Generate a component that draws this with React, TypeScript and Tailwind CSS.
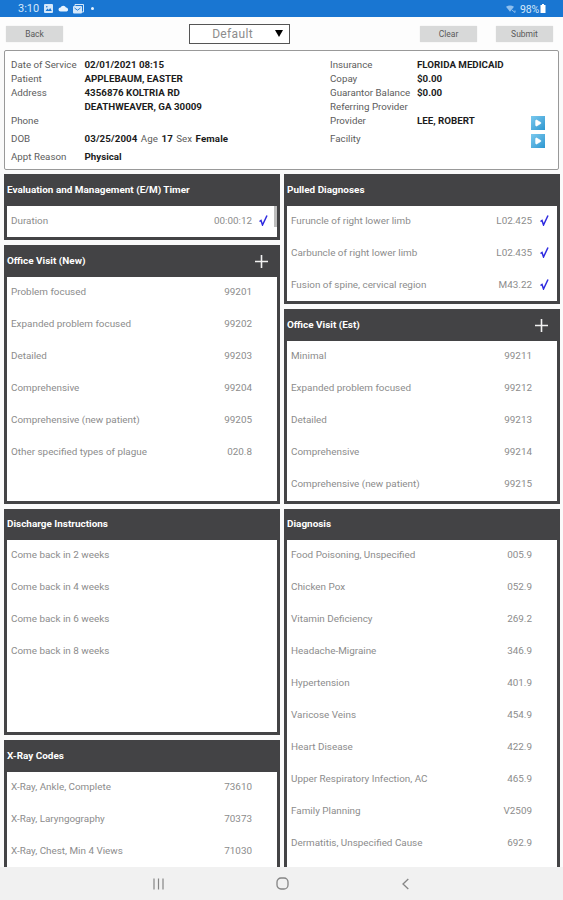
import { Play } from "lucide-react";
import clsx from "clsx";

type Item = { label: string; code?: string; checked?: boolean };

const timer: Item[] = [{ label: "Duration", code: "00:00:12", checked: true }];

const pulledDiagnoses: Item[] = [
  { label: "Furuncle of right lower limb", code: "L02.425", checked: true },
  { label: "Carbuncle of right lower limb", code: "L02.435", checked: true },
  { label: "Fusion of spine, cervical region", code: "M43.22", checked: true },
];

const officeVisitNew: Item[] = [
  { label: "Problem focused", code: "99201" },
  { label: "Expanded problem focused", code: "99202" },
  { label: "Detailed", code: "99203" },
  { label: "Comprehensive", code: "99204" },
  { label: "Comprehensive (new patient)", code: "99205" },
  { label: "Other specified types of plague", code: "020.8" },
];

const officeVisitEst: Item[] = [
  { label: "Minimal", code: "99211" },
  { label: "Expanded problem focused", code: "99212" },
  { label: "Detailed", code: "99213" },
  { label: "Comprehensive", code: "99214" },
  { label: "Comprehensive (new patient)", code: "99215" },
];

const discharge: Item[] = [
  { label: "Come back in 2 weeks" },
  { label: "Come back in 4 weeks" },
  { label: "Come back in 6 weeks" },
  { label: "Come back in 8 weeks" },
];

const diagnosis: Item[] = [
  { label: "Food Poisoning, Unspecified", code: "005.9" },
  { label: "Chicken Pox", code: "052.9" },
  { label: "Vitamin Deficiency", code: "269.2" },
  { label: "Headache-Migraine", code: "346.9" },
  { label: "Hypertension", code: "401.9" },
  { label: "Varicose Veins", code: "454.9" },
  { label: "Heart Disease", code: "422.9" },
  { label: "Upper Respiratory Infection, AC", code: "465.9" },
  { label: "Family Planning", code: "V2509" },
  { label: "Dermatitis, Unspecified Cause", code: "692.9" },
];

const xray: Item[] = [
  { label: "X-Ray, Ankle, Complete", code: "73610" },
  { label: "X-Ray, Laryngography", code: "70373" },
  { label: "X-Ray, Chest, Min 4 Views", code: "71030" },
];

function StatusBar() {
  return (
    <div className="flex h-[17px] shrink-0 items-center bg-[#1976d2] pr-[17px] pl-[18px] text-[11px] text-[#d5e8fa]">
      <span className="mt-[2px] w-[22px]">3:10</span>
      <svg className="ml-1 h-[9px] w-[9px]" viewBox="0 0 9 9">
        <rect width="9" height="9" rx="1" fill="#d5e8fa" />
        <path d="M1.5 7l2-2.5 1.3 1.4L6.2 4 7.8 7z" fill="#1976d2" />
        <circle cx="2.8" cy="2.7" r=".8" fill="#1976d2" />
      </svg>
      <svg className="ml-[5px] h-[7px] w-[11px]" viewBox="0 0 11 7">
        <path d="M2.5 6.5a2 2 0 0 1 0-4A3 3 0 0 1 8 2.6a2 2 0 0 1 .7 3.9z" fill="#e8f3fd" />
      </svg>
      <svg className="ml-[4px] h-[10px] w-[11px]" viewBox="0 0 11 10">
        <path d="M2 2V.5h8.5V8H9" fill="none" stroke="#d5e8fa" />
        <rect y="2" width="9" height="7.5" rx="1" fill="#d5e8fa" />
        <path d="M1.5 4l3 2.2 3-2.2" fill="none" stroke="#1976d2" strokeWidth=".9" />
      </svg>
      <span className="ml-[7px] h-[3px] w-[3px] rounded-full bg-[#e8f3fd]" />
      <svg className="ml-auto h-[8px] w-[10px]" viewBox="0 0 10 8">
        <path d="M0 1.8Q4 -1 8 1.8L4 6.8z" fill="#8fbfee" />
        <path d="M6 5l3 2.5M9 5.5v2" stroke="#8fbfee" />
      </svg>
      <span className="mt-[2px] ml-1 w-[20px] text-[10.5px] tracking-[-0.2px]">98%</span>
      <svg className="h-[9px] w-[6px]" viewBox="0 0 6 9">
        <path d="M2 0h2v1h1.5v8h-5V1H2z" fill="#fff" />
      </svg>
    </div>
  );
}

function ToolButton({ label, className }: { label: string; className?: string }) {
  return (
    <button
      className={clsx(
        "h-[16px] w-[57px] rounded-[1px] bg-[#d8d9d9] text-[8.5px] leading-[17px] text-[#5a5a5a] shadow-[0_0_1px_#c8c8c8]",
        className
      )}
    >
      {label}
    </button>
  );
}

function Toolbar() {
  return (
    <div className="flex h-[33px] shrink-0 items-center bg-[#fdfdfd] pr-[10px] pl-[6px]">
      <ToolButton label="Back" />
      <div className="ml-[126px] flex h-[20px] w-[101px] items-center justify-end border-[1.5px] border-[#555] bg-white pr-[6px]">
        <span className="mr-[22px] text-[12px] tracking-[0.35px] text-[#8c8c8c]">Default</span>
        <svg className="h-[7px] w-[8px]" viewBox="0 0 8 7">
          <path d="M0 0h8L4 7z" fill="#000" />
        </svg>
      </div>
      <ToolButton label="Clear" className="ml-auto" />
      <ToolButton label="Submit" className="ml-[19px]" />
    </div>
  );
}

function Field({
  label,
  value,
  className,
  labelWidth,
}: {
  label: string;
  value?: React.ReactNode;
  className: string;
  labelWidth: string;
}) {
  return (
    <div className={clsx("flex whitespace-nowrap", className)}>
      <span className={clsx("shrink-0 text-[#5c5c5c]", labelWidth)}>{label}</span>
      <span className="font-bold text-[#1c1c1c]">{value}</span>
    </div>
  );
}

function NextButton() {
  return (
    <button className="flex h-[14px] w-[14px] items-center justify-center bg-linear-to-br from-[#79c9ee] to-[#2a97d0]">
      <Play className="h-[8px] w-[8px] fill-white text-white" />
    </button>
  );
}

function PatientInfo() {
  return (
    <div className="ml-[4px] flex h-[120px] w-[555px] shrink-0 rounded-[2px] border border-[#999] bg-white pt-[7px] pl-[6px] text-[9.75px] leading-[14px]">
      <div className="w-[319px]">
        <Field label="Date of Service" value="02/01/2021 08:15" className="h-[14px]" labelWidth="w-[73.5px]" />
        <Field label="Patient" value="APPLEBAUM, EASTER" className="h-[14px]" labelWidth="w-[73.5px]" />
        <Field label="Address" value="4356876 KOLTRIA RD" className="h-[14px]" labelWidth="w-[73.5px]" />
        <Field label="" value="DEATHWEAVER, GA 30009" className="h-[14px]" labelWidth="w-[73.5px]" />
        <Field label="Phone" className="h-[18px]" labelWidth="w-[73.5px]" />
        <Field
          label="DOB"
          value={
            <span className="tracking-[0.1px] [word-spacing:0.8px]">
              03/25/2004 <span className="font-normal text-[#5c5c5c]">Age</span> 17{" "}
              <span className="font-normal text-[#5c5c5c]">Sex</span> Female
            </span>
          }
          className="h-[18px]"
          labelWidth="w-[73.5px]"
        />
        <Field label="Appt Reason" value="Physical" className="h-[14px]" labelWidth="w-[73.5px]" />
      </div>
      <div className="w-[201px]">
        <Field label="Insurance" value="FLORIDA MEDICAID" className="h-[14px]" labelWidth="w-[87px]" />
        <Field label="Copay" value="$0.00" className="h-[14px]" labelWidth="w-[87px]" />
        <Field label="Guarantor Balance" value="$0.00" className="h-[14px]" labelWidth="w-[87px]" />
        <Field label="Referring Provider" className="h-[14px]" labelWidth="w-[87px]" />
        <Field label="Provider" value="LEE, ROBERT" className="h-[18px]" labelWidth="w-[87px]" />
        <Field label="Facility" className="h-[14px]" labelWidth="w-[87px]" />
      </div>
      <div className="flex flex-col gap-[4px] pt-[58px]">
        <NextButton />
        <NextButton />
      </div>
    </div>
  );
}

function Panel({
  title,
  items,
  className,
  headerHeight = "h-[32px]",
  canAdd,
  scrollbar,
}: {
  title: string;
  items: Item[];
  className: string;
  headerHeight?: string;
  canAdd?: boolean;
  scrollbar?: boolean;
}) {
  return (
    <section className={clsx("flex flex-col border-[3px] border-t-0 border-[#434345] bg-white", className)}>
      <header
        className={clsx(
          "flex shrink-0 items-center justify-between bg-[#434345] pr-[9px] text-[9.95px] font-bold text-white",
          headerHeight
        )}
      >
        <span>{title}</span>
        {canAdd && (
          <svg className="h-[13px] w-[13px]" viewBox="0 0 13 13">
            <path d="M6.5 0v13M0 6.5h13" stroke="#f2f2f2" strokeWidth="1.6" />
          </svg>
        )}
      </header>
      <div className="flex min-h-0 flex-1 overflow-hidden">
        <ul className="flex-1">
          {items.map((item) => (
            <li
              key={item.label}
              className="flex h-8 pt-2 pl-[4px] text-[9.9px] leading-[13px] whitespace-nowrap text-[#8c8c8c]"
            >
              <span className="flex-1">{item.label}</span>
              <span>{item.code}</span>
              <span className={clsx("flex justify-center", scrollbar ? "w-[22px]" : "w-[25px]")}>
                {item.checked && (
                  <svg className="mt-[1px] h-[11px] w-[9px]" viewBox="0 0 9 11">
                    <path d="M.5 6.5l1.5-1L3.5 10 8 .5" fill="none" stroke="#2f2be0" strokeWidth="1.5" />
                  </svg>
                )}
              </span>
            </li>
          ))}
        </ul>
        {scrollbar && <div className="h-[21px] w-[3px] bg-[#bdbdbd]" />}
      </div>
    </section>
  );
}

function NavBar() {
  return (
    <nav className="flex h-[33px] shrink-0 items-center bg-[#f1f1f1] pl-[153px]">
      <svg className="h-[12px] w-[11px]" viewBox="0 0 11 12">
        <path d="M1 .5v11M5.5 .5v11M10 .5v11" stroke="#858585" strokeWidth="1.2" />
      </svg>
      <svg className="ml-[112px] h-[13px] w-[13px]" viewBox="0 0 13 13">
        <rect x="1" y="1" width="11" height="11" rx="4" fill="none" stroke="#858585" strokeWidth="1.3" />
      </svg>
      <svg className="ml-[113px] h-[12px] w-[7px]" viewBox="0 0 7 12">
        <path d="M6.3 1L1 6l5.3 5" fill="none" stroke="#858585" strokeWidth="1.3" />
      </svg>
    </nav>
  );
}

export default function App() {
  return (
    <div className="flex h-[900px] w-[563px] flex-col overflow-hidden bg-[#fafafa] font-['Roboto',sans-serif]">
      <StatusBar />
      <Toolbar />
      <PatientInfo />
      <main className="flex min-h-0 flex-1 gap-[4px] overflow-hidden pt-[4px] pl-[4px]">
        <div className="flex w-[276px] flex-col gap-[5px]">
          <Panel title="Evaluation and Management (E/M) Timer" items={timer} className="h-[66px] shrink-0" scrollbar />
          <Panel title="Office Visit (New)" items={officeVisitNew} className="h-[259px] shrink-0" canAdd />
          <Panel
            title="Discharge Instructions"
            items={discharge}
            className="h-[226px] shrink-0"
            headerHeight="h-[31px]"
          />
          <Panel title="X-Ray Codes" items={xray} className="h-[150px] shrink-0" />
        </div>
        <div className="flex w-[276px] flex-col gap-[5px]">
          <Panel title="Pulled Diagnoses" items={pulledDiagnoses} className="h-[130px] shrink-0" />
          <Panel title="Office Visit (Est)" items={officeVisitEst} className="h-[195px] shrink-0" canAdd />
          <Panel title="Diagnosis" items={diagnosis} className="h-[380px] shrink-0" headerHeight="h-[31px]" />
        </div>
      </main>
      <NavBar />
    </div>
  );
}
